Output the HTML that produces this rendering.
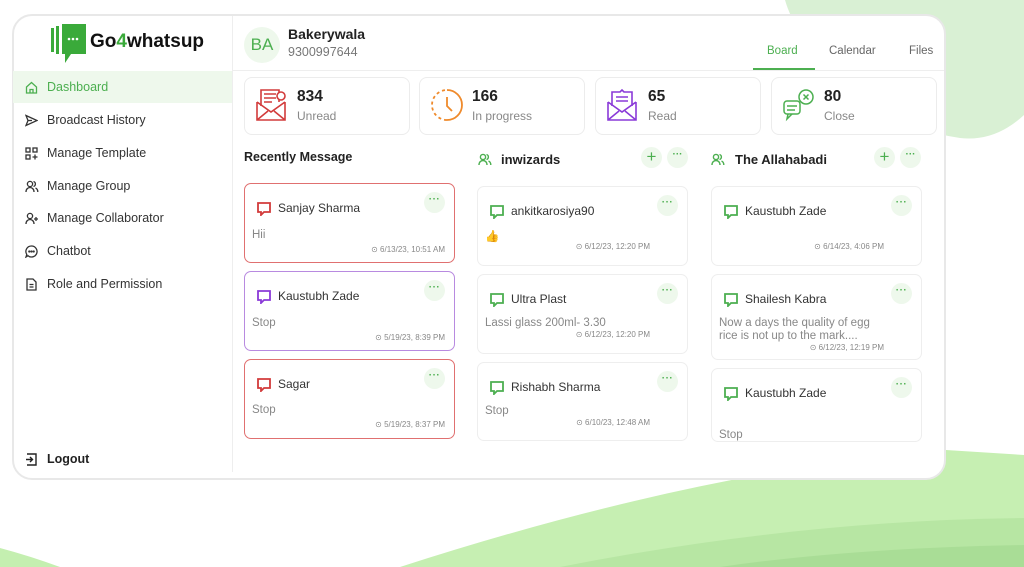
<!DOCTYPE html>
<html><head><meta charset="utf-8"><style>
*{box-sizing:border-box;margin:0;padding:0}
body{width:1024px;height:567px;overflow:hidden;background:#fff;font-family:"Liberation Sans",sans-serif;color:#222;position:relative}
.a{position:absolute}
.card{position:absolute;left:12px;top:14px;width:934px;height:466px;background:#fff;border:2px solid #e8e8e8;border-radius:20px;overflow:hidden}
.nav{position:absolute;left:13px;width:219px;height:32px;display:flex;align-items:center;font-size:12.5px;color:#333}
.nav svg{position:absolute;left:12px}
.nav span{position:absolute;left:34px}
.stat{position:absolute;top:77px;width:166px;height:58px;border:1px solid #ececec;border-radius:8px}
.stat b{position:absolute;left:52px;top:10px;font-size:15.5px;color:#222}
.stat i{position:absolute;left:52px;top:31px;font-size:12px;color:#888;font-style:normal}
.stat svg{position:absolute;left:10px;top:10px}
.m{position:absolute;width:211px;border:1px solid #eee;border-radius:7px;background:#fff}
.m .n{position:absolute;left:33px;top:17px;font-size:12px;color:#333}
.m .ic{position:absolute;left:12px;top:18px}
.m .t{position:absolute;left:7px;font-size:11.5px;color:#888}
.m .d{position:absolute;right:9px;font-size:8px;color:#888}
.dots{position:absolute;right:9px;top:8px;width:21px;height:21px;border-radius:50%;background:#eef8ec;color:#4caf50;font-size:10px;text-align:center;line-height:15px;font-weight:bold;letter-spacing:0.5px}
.cb{position:absolute;width:21px;height:21px;border-radius:50%;background:#eef8ec;color:#4caf50;text-align:center}
</style></head><body>
<svg class="a" style="left:0;top:0" width="1024" height="567">
<path d="M785 0 L1024 0 L1024 115 Q995 142 960 138 Q890 128 835 75 Q795 35 785 0Z" fill="#d9f0d4"/>
<path d="M0 567 L0 548 Q30 556 60 567Z" fill="#c4efb0"/>
<path d="M400 567 Q700 470 946 450 L1024 455 L1024 567Z" fill="#c6efb2"/>
<path d="M560 567 Q800 520 1024 518 L1024 567Z" fill="#b7e6a3"/>
<path d="M720 567 Q850 548 1024 545 L1024 567Z" fill="#a9dd96"/>
</svg>
<div class="card"></div>
<!-- logo -->
<svg class="a" style="left:50px;top:22px" width="40" height="44"><rect x="1" y="6" width="3" height="24" fill="#3aaa3a"/><rect x="6" y="4" width="3" height="28" fill="#3aaa3a"/><path d="M12 2h24v30h-15l-6 9v-9h-3z" fill="#3aaa3a"/><circle cx="19" cy="17" r="1.3" fill="#fff"/><circle cx="23" cy="17" r="1.3" fill="#fff"/><circle cx="27" cy="17" r="1.3" fill="#fff"/></svg>
<div class="a" style="left:90px;top:31px;font-size:19px;font-weight:bold;color:#111">Go<span style="color:#3aaa3a">4</span>whatsup</div>
<div class="a" style="left:232px;top:16px;width:1px;height:456px;background:#eee"></div>
<div class="a" style="left:233px;top:70px;width:711px;height:1px;background:#eee"></div>
<div class="nav" style="top:71px;background:#eef8ec;color:#4caf50"><svg width="13" height="13" viewBox="0 0 13 13" fill="none" stroke="#4caf50" stroke-width="1.3"><path d="M1.5 6L6.5 1.5 11.5 6V12H1.5Z"/><path d="M5 12V8.5H8V12"/></svg><span>Dashboard</span></div>
<div class="nav" style="top:104px"><svg width="13" height="13" fill="none" stroke="#333" stroke-width="1.3"><path d="M1 1.5L12 6.5 1 11.5 3 6.5Z"/><path d="M3 6.5H7"/></svg><span>Broadcast History</span></div>
<div class="nav" style="top:137px"><svg width="13" height="13" fill="none" stroke="#333" stroke-width="1.3"><rect x="1" y="1" width="4" height="4"/><rect x="8" y="1" width="4" height="4"/><rect x="1" y="8" width="4" height="4"/><path d="M10 7.5V12.5M7.5 10H12.5"/></svg><span>Manage Template</span></div>
<div class="nav" style="top:170px"><svg width="14" height="13" fill="none" stroke="#333" stroke-width="1.3"><circle cx="5" cy="4" r="2.6"/><path d="M1 12c0-3 2-4.5 4-4.5s4 1.5 4 4.5"/><path d="M8.5 1.5a2.6 2.6 0 010 5M10.5 8c1.5.6 2.3 2 2.3 4"/></svg><span>Manage Group</span></div>
<div class="nav" style="top:202px"><svg width="14" height="13" fill="none" stroke="#333" stroke-width="1.3"><circle cx="5" cy="4" r="2.6"/><path d="M1 12c0-3 2-4.5 4-4.5s4 1.5 4 4.5"/><path d="M11 5v4M9 7h4"/></svg><span>Manage Collaborator</span></div>
<div class="nav" style="top:235px"><svg width="13" height="13" fill="none" stroke="#333" stroke-width="1.3"><path d="M6.5 1a5.5 5.5 0 11-3.5 9.7L1 12l.8-2.5A5.5 5.5 0 016.5 1z"/><circle cx="4.3" cy="6.5" r=".5" fill="#333"/><circle cx="6.5" cy="6.5" r=".5" fill="#333"/><circle cx="8.7" cy="6.5" r=".5" fill="#333"/></svg><span>Chatbot</span></div>
<div class="nav" style="top:268px"><svg width="13" height="13" fill="none" stroke="#333" stroke-width="1.3"><path d="M2 1h6l3 3v8H2Z"/><path d="M4.5 6.5h4M4.5 9h4"/></svg><span>Role and Permission</span></div>
<div class="nav" style="top:443px;font-weight:bold;color:#222"><svg width="13" height="13" fill="none" stroke="#222" stroke-width="1.4"><path d="M2 1h9v11H2M1 6.5h6M5 4l2.5 2.5L5 9"/></svg><span>Logout</span></div>
<!-- header -->
<div class="a" style="left:244px;top:27px;width:36px;height:36px;border-radius:50%;background:#eef8ec;color:#4caf50;font-size:17px;text-align:center;line-height:36px">BA</div>
<div class="a" style="left:288px;top:26px;font-size:14px;font-weight:bold;color:#222">Bakerywala</div>
<div class="a" style="left:288px;top:45px;font-size:12.5px;color:#777">9300997644</div>
<div class="a" style="left:767px;top:45px;font-size:11.5px;color:#4caf50">Board</div>
<div class="a" style="left:753px;top:68px;width:62px;height:2px;background:#4caf50"></div>
<div class="a" style="left:829px;top:45px;font-size:11.5px;color:#666">Calendar</div>
<div class="a" style="left:909px;top:45px;font-size:11.5px;color:#666">Files</div>
<!-- stats -->
<div class="stat" style="left:244px"><svg width="32" height="34" fill="none" stroke="#d23b3b" stroke-width="1.6"><path d="M2 14v18h28V14M2 14l14 10 14-10M2 32l11-9M30 32l-11-9"/><path d="M6 18V2h18v12"/><path d="M9 6h12M9 10h12M9 14h8"/><circle cx="26" cy="8" r="4" fill="#fff"/></svg><b>834</b><i>Unread</i></div>
<div class="stat" style="left:419px"><svg width="34" height="34" fill="none" stroke="#ef8a2b" stroke-width="1.8"><path d="M17 2a15 15 0 110 30" /><path d="M17 32a15 15 0 01-15-15A15 15 0 0117 2" stroke-dasharray="3 3"/><path d="M17 9v9l5 5"/></svg><b>166</b><i>In progress</i></div>
<div class="stat" style="left:595px"><svg width="32" height="34" fill="none" stroke="#8a3ad8" stroke-width="1.6"><path d="M2 14v18h28V14M2 14l14 10 14-10M2 32l11-9M30 32l-11-9"/><path d="M6 18V4h8l2-2 2 2h8v14"/><path d="M10 9h12M10 13h12"/></svg><b>65</b><i>Read</i></div>
<div class="stat" style="left:771px"><svg width="34" height="34" fill="none" stroke="#4caf50" stroke-width="1.5"><rect x="2" y="13" width="16" height="13" rx="3"/><path d="M6 26l-1 5 5-5M5 18h10M5 22h8"/><circle cx="24" cy="9" r="7"/><path d="M21.5 6.5l5 5M26.5 6.5l-5 5"/></svg><b>80</b><i>Close</i></div>
<!-- column titles -->
<div class="a" style="left:244px;top:150px;font-size:12.5px;font-weight:bold;color:#222">Recently Message</div>
<svg class="a" style="left:478px;top:153px" width="15" height="13" fill="none" stroke="#4caf50" stroke-width="1.4"><circle cx="5" cy="4" r="2.6"/><path d="M1 12c0-3 2-4.5 4-4.5s4 1.5 4 4.5"/><path d="M8.5 1.5a2.6 2.6 0 010 5M10.5 8c1.5.6 2.3 2 2.3 4"/></svg>
<div class="a" style="left:501px;top:152px;font-size:13px;font-weight:bold;color:#222">inwizards</div>
<div class="cb" style="left:641px;top:147px;font-size:17px;line-height:20px">+</div>
<div class="cb" style="left:667px;top:147px;font-size:10px;line-height:15px;font-weight:bold">···</div>
<svg class="a" style="left:711px;top:153px" width="15" height="13" fill="none" stroke="#4caf50" stroke-width="1.4"><circle cx="5" cy="4" r="2.6"/><path d="M1 12c0-3 2-4.5 4-4.5s4 1.5 4 4.5"/><path d="M8.5 1.5a2.6 2.6 0 010 5M10.5 8c1.5.6 2.3 2 2.3 4"/></svg>
<div class="a" style="left:735px;top:152px;font-size:13px;font-weight:bold;color:#222">The Allahabadi</div>
<div class="cb" style="left:874px;top:147px;font-size:17px;line-height:20px">+</div>
<div class="cb" style="left:900px;top:147px;font-size:10px;line-height:15px;font-weight:bold">···</div>

<!-- recent -->
<div class="m" style="left:244px;top:183px;height:80px;border-color:#e07070"><svg class="ic" width="14" height="14" fill="none" stroke="#d23b3b" stroke-width="1.8"><path d="M1 1h12v9H7l-3 3v-3H1z"/></svg><div class="n">Sanjay Sharma</div><div class="dots">···</div><div class="t" style="top:45px">Hii</div><div class="d" style="top:61px">⊙ 6/13/23, 10:51 AM</div></div>
<div class="m" style="left:244px;top:271px;height:80px;border-color:#b88ae0"><svg class="ic" width="14" height="14" fill="none" stroke="#8a3ad8" stroke-width="1.8"><path d="M1 1h12v9H7l-3 3v-3H1z"/></svg><div class="n">Kaustubh Zade</div><div class="dots">···</div><div class="t" style="top:45px">Stop</div><div class="d" style="top:61px">⊙ 5/19/23, 8:39 PM</div></div>
<div class="m" style="left:244px;top:359px;height:80px;border-color:#e07070"><svg class="ic" width="14" height="14" fill="none" stroke="#d23b3b" stroke-width="1.8"><path d="M1 1h12v9H7l-3 3v-3H1z"/></svg><div class="n">Sagar</div><div class="dots">···</div><div class="t" style="top:44px">Stop</div><div class="d" style="top:60px">⊙ 5/19/23, 8:37 PM</div></div>

<!-- inwizards -->
<div class="m" style="left:477px;top:186px;height:80px"><svg class="ic" width="14" height="14" fill="none" stroke="#4caf50" stroke-width="1.8"><path d="M1 1h12v9H7l-3 3v-3H1z"/></svg><div class="n">ankitkarosiya90</div><div class="dots">···</div><div class="t" style="top:42px">👍</div><div class="d" style="top:55px;right:37px">⊙ 6/12/23, 12:20 PM</div></div>
<div class="m" style="left:477px;top:274px;height:80px"><svg class="ic" width="14" height="14" fill="none" stroke="#4caf50" stroke-width="1.8"><path d="M1 1h12v9H7l-3 3v-3H1z"/></svg><div class="n">Ultra Plast</div><div class="dots">···</div><div class="t" style="top:42px">Lassi glass 200ml- 3.30</div><div class="d" style="top:55px;right:37px">⊙ 6/12/23, 12:20 PM</div></div>
<div class="m" style="left:477px;top:362px;height:79px"><svg class="ic" width="14" height="14" fill="none" stroke="#4caf50" stroke-width="1.8"><path d="M1 1h12v9H7l-3 3v-3H1z"/></svg><div class="n">Rishabh Sharma</div><div class="dots">···</div><div class="t" style="top:42px">Stop</div><div class="d" style="top:55px;right:37px">⊙ 6/10/23, 12:48 AM</div></div>

<!-- allahabadi -->
<div class="m" style="left:711px;top:186px;height:80px"><svg class="ic" width="14" height="14" fill="none" stroke="#4caf50" stroke-width="1.8"><path d="M1 1h12v9H7l-3 3v-3H1z"/></svg><div class="n">Kaustubh Zade</div><div class="dots">···</div><div class="d" style="top:55px;right:37px">⊙ 6/14/23, 4:06 PM</div></div>
<div class="m" style="left:711px;top:274px;height:86px"><svg class="ic" width="14" height="14" fill="none" stroke="#4caf50" stroke-width="1.8"><path d="M1 1h12v9H7l-3 3v-3H1z"/></svg><div class="n">Shailesh Kabra</div><div class="dots">···</div><div class="t" style="top:42px;line-height:13px">Now a days the quality of egg<br>rice is not up to the mark....</div><div class="d" style="top:68px;right:37px">⊙ 6/12/23, 12:19 PM</div></div>
<div class="m" style="left:711px;top:368px;height:74px"><svg class="ic" width="14" height="14" fill="none" stroke="#4caf50" stroke-width="1.8"><path d="M1 1h12v9H7l-3 3v-3H1z"/></svg><div class="n">Kaustubh Zade</div><div class="dots">···</div><div class="t" style="top:60px">Stop</div></div>
</body></html>
